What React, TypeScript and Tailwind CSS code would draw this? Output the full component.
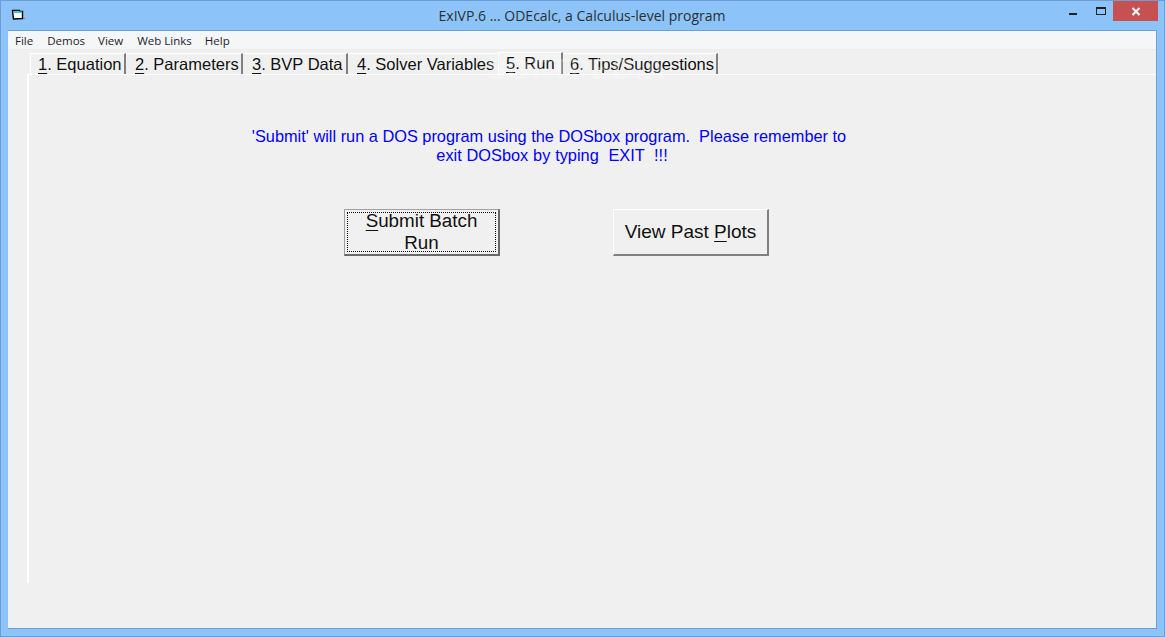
import React from "react";

const tabs = [
  { n: "1", t: ". Equation", w: "w-[96px]", pl: "pl-[7px]", l: "border-l border-l-white border-r-2 border-r-[#808080]" },
  { n: "2", t: ". Parameters", w: "w-[117px]", pl: "pl-[9px]", l: "border-r-2 border-r-[#808080]" },
  { n: "3", t: ". BVP Data", w: "w-[105px]", pl: "pl-[9px]", l: "border-r-2 border-r-[#808080]" },
  { n: "4", t: ". Solver Variables", w: "w-[150px]", pl: "pl-[9px]", l: "" },
];

function Tab({ n, t, w, pl, l }: { n: string; t: string; w: string; pl: string; l: string }) {
  return (
    <div className={`${w} ${pl} ${l} h-[21px] flex items-center border-t border-t-white whitespace-nowrap`}>
      <span className="underline underline-offset-[3px]">{n}</span>
      <span>{t}</span>
    </div>
  );
}

export default function App() {
  return (
    <div className="w-[1165px] h-[637px] overflow-hidden bg-[#8cc4fa] border border-[#6b9fd3] flex flex-col font-['Liberation_Sans',Arial,sans-serif] text-black">
      <div className="h-[29px] shrink-0 relative flex items-center justify-center">
        <svg className="absolute left-[10px] top-[8px]" width="14" height="12" viewBox="0 0 14 12">
          <path d="M1.5 1.5h7l0.5 1h2.5v7l-9 0.5z" fill="#fff" stroke="#000" strokeWidth="1.4" />
          <path d="M3 2.4h8v1.6H3z" fill="#12dcdc" />
          <rect x="12" y="9" width="2" height="1" fill="#808080" />
        </svg>
        <span className="font-['Open_Sans',sans-serif] text-[14px] leading-none text-[#2a2f33] ml-[-1px]">ExIVP.6 ... ODEcalc, a Calculus-level program</span>
        <div className="absolute right-[87px] top-[12px] w-[8px] h-[2px] bg-[#222]" />
        <div className="absolute right-[58px] top-[6px] w-[10px] h-[8px] border border-[#222] border-t-2" />
        <div className="absolute right-[6px] top-0 w-[45px] h-[20px] bg-[#c75050] flex items-center justify-center">
          <svg width="10" height="9" viewBox="0 0 10 9">
            <path d="M1.5 1l7 7M8.5 1l-7 7" stroke="#fff" strokeWidth="2" />
          </svg>
        </div>
      </div>
      <div className="mx-[7px] mb-[7px] flex-1 min-h-0 bg-[#f0f0f0] border border-l-0 border-[#6f9fcf] flex flex-col">
        <div className="h-[19px] shrink-0 bg-[#f5f6f7] border-b border-b-[#ececec] flex items-center pl-[7px] pt-[1px] font-['Open_Sans',sans-serif] text-[11.5px] text-[#1c1c30]">
          <span>File</span>
          <span className="ml-[14px]">Demos</span>
          <span className="ml-[13px]">View</span>
          <span className="ml-[14px]">Web Links</span>
          <span className="ml-[13px]">Help</span>
        </div>
        <div className="flex-1 min-h-0 flex flex-col relative">
          <div className="pl-[22px] pt-[3px] h-[24px] shrink-0 flex text-[16.5px] leading-none text-[#111] relative">
            {tabs.map((x) => (
              <Tab key={x.n} {...x} />
            ))}
            <div className="w-[65px] h-[23px] mt-[-1px] pb-[2px] pl-[7px] bg-[#f3f3f3] border-t border-l border-white flex items-center border-r-2 border-r-[#808080] whitespace-nowrap">
              <span className="underline underline-offset-[3px]">5</span>
              <span>. Run</span>
            </div>
            <div className="w-[155px] pl-[7px] h-[21px] flex items-center border-t border-t-white border-r-2 border-r-[#808080] whitespace-nowrap">
              <span className="underline underline-offset-[3px]">6</span>
              <span>. Tips/Suggestions</span>
            </div>
            <span className="absolute left-[478px] top-[4px] text-[30px] font-bold tracking-[1px] text-white/25 pointer-events-none">SOFTPEDIA</span>
          </div>
          <div className="ml-[19px] h-[509px] shrink-0 border-t border-l-2 border-white pt-[52px] relative">
            <p className="w-[1040px] text-center text-[#0000ff] text-[16.33px] leading-[19px] whitespace-pre-wrap">
              <span className="block">{"'Submit' will run a DOS program using the DOSbox program.  Please remember to"}</span>
              <span className="block pl-[6px] [word-spacing:0.3px]">{"exit DOSbox by typing  EXIT  !!!"}</span>
            </p>
            <div className="flex mt-[44px] ml-[315px] gap-[113px]">
              <button className="w-[156px] h-[47px] bg-[#f0f0f0] border-t border-l border-[#a0a0a0] border-r-2 border-b-2 border-r-[#696969] border-b-[#696969] p-[2px] text-[18.8px] leading-[22px] text-[#111]">
                <div className="h-full border border-dotted border-black flex flex-col items-center justify-center">
                  <span><span className="underline underline-offset-[3px]">S</span>ubmit Batch</span>
                  <span>Run</span>
                </div>
              </button>
              <button className="w-[156px] h-[47px] bg-[#f0f0f0] border-t border-l border-white border-r-2 border-b-2 border-r-[#808080] border-b-[#808080] text-[19px] leading-[22px] text-[#111]">
                View Past <span className="underline underline-offset-[3px]">P</span>lots
              </button>
            </div>
          </div>
        </div>
      </div>
    </div>
  );
}
